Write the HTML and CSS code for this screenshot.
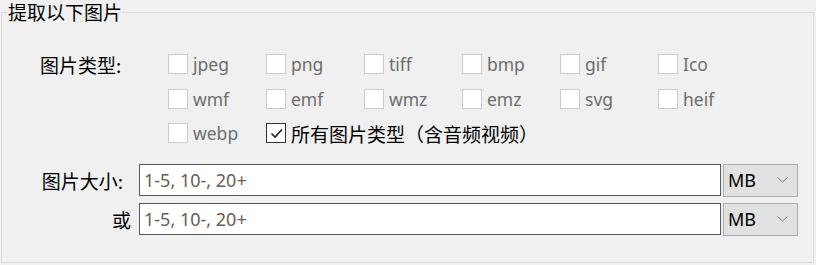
FILE: index.html
```html
<!DOCTYPE html>
<html lang="zh">
<head>
<meta charset="utf-8">
<link rel="stylesheet" href="styles.css">
</head>
<body>
<fieldset class="group">
  <legend class="legend">提取以下图片</legend>
  <div class="types">
    <div class="types-label">图片类型:</div>
    <label class="cb disabled"><span class="box"></span><span>jpeg</span></label>
    <label class="cb disabled"><span class="box"></span><span>png</span></label>
    <label class="cb disabled"><span class="box"></span><span>tiff</span></label>
    <label class="cb disabled"><span class="box"></span><span>bmp</span></label>
    <label class="cb disabled"><span class="box"></span><span>gif</span></label>
    <label class="cb disabled"><span class="box"></span><span>Ico</span></label>

    <div class="types-label"></div>
    <label class="cb disabled"><span class="box"></span><span>wmf</span></label>
    <label class="cb disabled"><span class="box"></span><span>emf</span></label>
    <label class="cb disabled"><span class="box"></span><span>wmz</span></label>
    <label class="cb disabled"><span class="box"></span><span>emz</span></label>
    <label class="cb disabled"><span class="box"></span><span>svg</span></label>
    <label class="cb disabled"><span class="box"></span><span>heif</span></label>

    <div class="types-label"></div>
    <label class="cb disabled"><span class="box"></span><span>webp</span></label>
    <label class="cb checked all"><span class="box"><svg width="17" height="17" viewBox="0 0 17 17"><path d="M3.5 8.5 L7 12 L14 4.5" fill="none" stroke="#222" stroke-width="1.6"/></svg></span><span class="cjk">所有图片类型（含音频视频）</span></label>
  </div>

  <div class="sizes">
    <div class="size-label lbl-size">图片大小:</div>
    <div class="input"><span class="ph">1-5, 10-, 20+</span></div>
    <div class="combo"><span>MB</span><svg width="11" height="6" viewBox="0 0 11 6"><path d="M0.5 0.5 L5.5 5 L10.5 0.5" fill="none" stroke="#777" stroke-width="1"/></svg></div>

    <div class="size-label lbl-or">或</div>
    <div class="input"><span class="ph">1-5, 10-, 20+</span></div>
    <div class="combo"><span>MB</span><svg width="11" height="6" viewBox="0 0 11 6"><path d="M0.5 0.5 L5.5 5 L10.5 0.5" fill="none" stroke="#777" stroke-width="1"/></svg></div>
  </div>
</fieldset>
</body>
</html>
```

FILE: styles.css
```css
html, body {
  margin: 0;
  padding: 0;
  background: #f0f0f0;
  width: 816px;
  height: 265px;
  overflow: hidden;
}
body {
  font-family: "Noto Sans", "Noto Sans CJK SC", sans-serif;
  font-size: 17.5px;
  color: #000;
}
.group {
  margin: 0 2px 2px 1px;
  padding: 0;
  border: 1px solid #dcdcdc;
  height: 263px;
  box-sizing: border-box;
  min-width: 0;
}
.legend {
  font-family: "Noto Sans CJK SC", sans-serif;
  font-size: 19px;
  line-height: 24px;
  padding: 0 1px;
  margin-left: 5px;
  color: #000;
}
.types {
  display: grid;
  grid-template-columns: 166px repeat(6, 98px);
  grid-template-rows: 34px 35px 34px;
  margin-top: 23px;
  align-items: center;
}
.types-label {
  font-family: "Noto Sans CJK SC", sans-serif;
  font-size: 19px;
  padding-left: 38px;
}
.cb {
  display: flex;
  align-items: center;
  gap: 5px;
  white-space: nowrap;
}
.box {
  width: 20px;
  height: 20px;
  box-sizing: border-box;
  border: 1px solid #cccccc;
  background: #fff;
  display: flex;
  align-items: center;
  justify-content: center;
  flex: none;
}
.disabled {
  color: #6d6d6d;
}
.checked .box {
  border-color: #333;
}
.all {
  grid-column: 3 / span 5;
}
.cjk {
  font-family: "Noto Sans CJK SC", sans-serif;
  font-size: 19px;
  color: #000;
}
.sizes {
  display: grid;
  grid-template-columns: 135px 582px 75px;
  column-gap: 2px;
  row-gap: 7px;
  grid-auto-rows: 32px;
  margin-top: 14px;
  align-items: center;
}
.size-label {
  font-family: "Noto Sans CJK SC", sans-serif;
  font-size: 19px;
  justify-self: end;
}
.lbl-size {
  padding-right: 14px;
}
.lbl-or {
  padding-right: 6px;
}
.input {
  height: 32px;
  box-sizing: border-box;
  border: 1px solid #575757;
  background: #fff;
  display: flex;
  align-items: center;
  padding-left: 4px;
}
.ph {
  color: #6b5e52;
  font-size: 18px;
}
.combo {
  height: 33px;
  box-sizing: border-box;
  border: 1px solid #adadad;
  background: #e1e1e1;
  display: flex;
  align-items: center;
  justify-content: space-between;
  padding: 0 9px 1px 4px;
  font-size: 18px;
}
```
